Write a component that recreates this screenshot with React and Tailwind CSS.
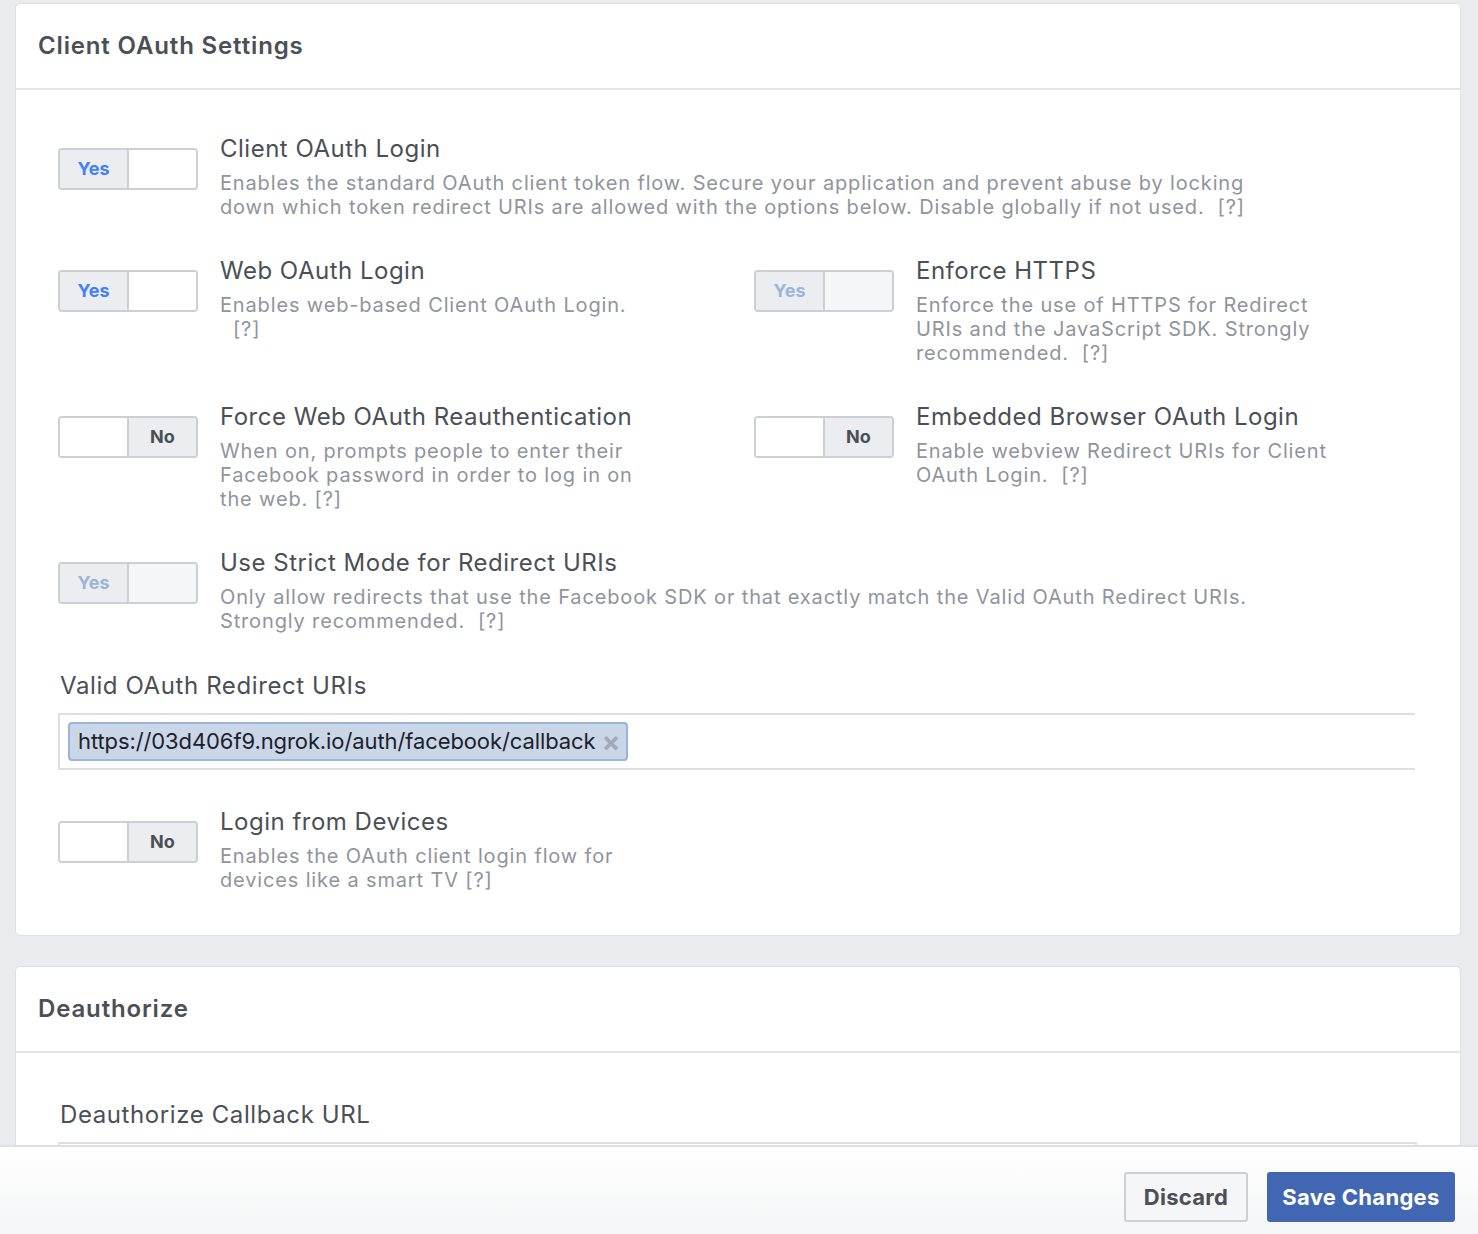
import React from "react";

const font = { fontFamily: "Inter, 'Noto Sans', sans-serif" };

function Toggle({ on, disabled }) {
  if (on) {
    return (
      <div className="flex w-[140px] h-[42px] shrink-0 rounded-[4px] border-2 border-[#ccd0d5] overflow-hidden">
        <div
          className={
            "w-[69px] flex items-center justify-center pb-[2px] font-bold text-[18px] border-r-2 border-[#ccd0d5] bg-[#ebedf0] " +
            (disabled ? "text-[#9cb4d8]" : "text-[#4080ff]")
          }
        >
          Yes
        </div>
        <div className={"flex-1 " + (disabled ? "bg-[#f5f6f7]" : "bg-white")}></div>
      </div>
    );
  }
  return (
    <div className="flex w-[140px] h-[42px] shrink-0 rounded-[4px] border-2 border-[#ccd0d5] overflow-hidden">
      <div className="w-[69px] bg-white border-r-2 border-[#ccd0d5]"></div>
      <div className="flex-1 flex items-center justify-center pb-[2px] font-bold text-[18px] bg-[#ebedf0] text-[#4b4f56]">
        No
      </div>
    </div>
  );
}

function Setting({ on, disabled, title, children, wide }) {
  return (
    <div className="flex items-start">
      <div className="pt-[13px]">
        <Toggle on={on} disabled={disabled} />
      </div>
      <div className={"ml-[22px] " + (wide ? "max-w-[1040px]" : "max-w-[420px]")}>
        <div className="text-[24px] leading-[28px] text-[#4b4f56] tracking-[0.5px]">{title}</div>
        <div className="mt-[8px] text-[20px] leading-[24px] text-[#90949c] tracking-[0.85px]">
          {children}
        </div>
      </div>
    </div>
  );
}

function CardHeader({ children }) {
  return (
    <div className="h-[86px] flex items-center px-[22px] border-b-2 border-[#e5e5e5]">
      <h2 className="text-[24px] font-semibold text-[#4b4f56] tracking-[0.85px]">{children}</h2>
    </div>
  );
}

export default function App() {
  return (
    <div className="w-[1478px] h-[1234px] flex flex-col bg-[#e9ebee] overflow-hidden" style={font}>
      <div className="flex-1 overflow-hidden pt-[3px] pl-[15px] pr-[17px]">
        <div className="bg-white rounded-[5px] border border-[#dddfe2]">
          <CardHeader>Client OAuth Settings</CardHeader>
          <div className="pl-[42px] pr-[45px] pt-[45px] pb-[43px]">
            <Setting on title="Client OAuth Login" wide>
              Enables the standard OAuth client token flow. Secure your application and prevent abuse by locking
              down which token redirect URIs are allowed with the options below. Disable globally if not used.&nbsp; [?]
            </Setting>

            <div className="grid grid-cols-[696px_1fr] mt-[38px]">
              <Setting on title="Web OAuth Login">
                Enables web-based Client OAuth Login.
                <br />
                &nbsp;&nbsp;[?]
              </Setting>
              <Setting on disabled title="Enforce HTTPS">
                Enforce the use of HTTPS for Redirect URIs and the JavaScript SDK. Strongly recommended.&nbsp; [?]
              </Setting>
            </div>

            <div className="grid grid-cols-[696px_1fr] mt-[38px]">
              <Setting title="Force Web OAuth Reauthentication">
                When on, prompts people to enter their Facebook password in order to log in on the web. [?]
              </Setting>
              <Setting title="Embedded Browser OAuth Login">
                Enable webview Redirect URIs for Client OAuth Login.&nbsp; [?]
              </Setting>
            </div>

            <div className="mt-[38px]">
              <Setting on disabled title="Use Strict Mode for Redirect URIs" wide>
                Only allow redirects that use the Facebook SDK or that exactly match the Valid OAuth Redirect URIs.
                <br />
                Strongly recommended.&nbsp; [?]
              </Setting>
            </div>

            <div className="mt-[39px] pl-[2px] text-[24px] leading-[28px] text-[#4b4f56] tracking-[0.6px]">
              Valid OAuth Redirect URIs
            </div>
            <div className="mt-[13px] h-[57px] border-2 border-r-0 border-[#dddfe2] flex items-center px-[8px]">
              <div className="flex items-center h-[39px] pl-[8px] pr-[6px] bg-[#c9d6e8] border-2 border-[#9cb4d8] rounded-[4px] text-[22px] text-[#1d2129] tracking-[-0.1px]">
                https://03d406f9.ngrok.io/auth/facebook/callback
                <span className="ml-[6px] text-[#a2aab5] text-[28px] leading-none font-bold">×</span>
              </div>
            </div>

            <div className="mt-[38px]">
              <Setting title="Login from Devices">
                Enables the OAuth client login flow for devices like a smart TV [?]
              </Setting>
            </div>
          </div>
        </div>

        <div className="mt-[30px] bg-white rounded-[5px] border border-[#dddfe2]">
          <CardHeader>Deauthorize</CardHeader>
          <div className="pl-[42px] pr-[43px] pt-[48px]">
            <div className="pl-[2px] text-[24px] leading-[28px] text-[#4b4f56] tracking-[0.6px]">
              Deauthorize Callback URL
            </div>
            <div className="mt-[13px] h-[57px] border-2 border-[#dddfe2]"></div>
          </div>
        </div>
      </div>

      <div className="h-[89px] shrink-0 bg-gradient-to-b from-white to-[#f5f6f7] border-t-2 border-[#dddfe2] flex justify-end items-start pt-[25px] pr-[23px] gap-[19px]">
        <button className="w-[124px] h-[50px] rounded-[3px] border-2 border-[#ccd0d5] bg-[#f5f6f7] text-[#4b4f56] text-[22px] font-bold tracking-[0.3px]">
          Discard
        </button>
        <button className="w-[188px] h-[50px] rounded-[3px] bg-[#4267b2] text-white text-[22px] font-bold tracking-[0.3px]">
          Save Changes
        </button>
      </div>
    </div>
  );
}
